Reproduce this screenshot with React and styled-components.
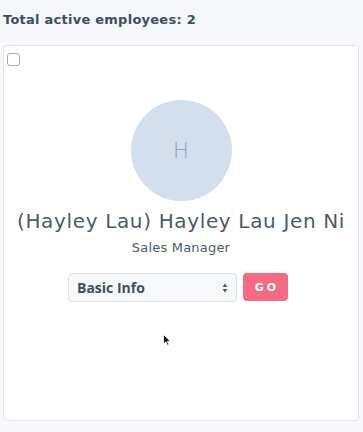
import styled, { createGlobalStyle } from "styled-components";

const GlobalStyle = createGlobalStyle`
  html, body {
    margin: 0;
    padding: 0;
    background: #f6f8fb;
    font-family: "DejaVu Sans", "Open Sans", sans-serif;
  }
`;

const Page = styled.div`
  width: 363px;
  height: 432px;
  box-sizing: border-box;
  padding: 10px 4px 11px 3px;
  display: flex;
  flex-direction: column;
  gap: 15px;
`;

const Heading = styled.h3`
  margin: 0;
  font-size: 13px;
  line-height: 20px;
  font-weight: 700;
  color: #3e4f5e;
  letter-spacing: 0.25px;
`;

const Card = styled.div`
  position: relative;
  flex: 1;
  background: #fff;
  border: 1px solid #e2e5ea;
  border-radius: 4px;
  display: flex;
  flex-direction: column;
  align-items: center;
  padding-top: 54px;
`;

const Check = styled.input`
  position: absolute;
  top: 7px;
  left: 3px;
  width: 13px;
  height: 13px;
  margin: 0;
  appearance: none;
  border: 1px solid #a9aeb5;
  border-radius: 3px;
  background: #fff;
`;

const Avatar = styled.div`
  width: 101px;
  height: 101px;
  border-radius: 50%;
  background: #d4dfee;
  color: #8c9fc7;
  font-size: 21px;
  font-weight: 300;
  display: flex;
  align-items: center;
  justify-content: center;
`;

const Name = styled.div`
  margin-top: 8px;
  font-size: 20px;
  line-height: 24px;
  font-weight: 400;
  color: #4b5b6a;
  letter-spacing: 0.65px;
  white-space: nowrap;
`;

const Role = styled.div`
  margin-top: 7px;
  font-size: 13px;
  line-height: 16px;
  color: #4b5b6a;
  letter-spacing: 0.2px;
`;

const Actions = styled.div`
  margin: 17px 6px 0 0;
  display: flex;
  gap: 6px;
`;

const Select = styled.div`
  width: 169px;
  height: 29px;
  box-sizing: border-box;
  border: 1px solid #dfe2e6;
  border-radius: 4px;
  background: #f8f9fa;
  padding: 0 8px 0 8px;
  display: flex;
  align-items: center;
  justify-content: space-between;
  font-family: "Open Sans", sans-serif;
  font-size: 14px;
  font-weight: 700;
  color: #3e4f5e;
`;

const GoButton = styled.button`
  width: 45px;
  height: 28px;
  border: none;
  border-radius: 4px;
  background: #f56b83;
  color: #fff;
  font-family: inherit;
  font-size: 11px;
  font-weight: 700;
  letter-spacing: 3px;
  padding: 0 0 0 3px;
`;

const Cursor = styled.svg`
  position: absolute;
  left: 159px;
  top: 288px;
`;

const Arrows = () => (
  <svg width="6" height="10" viewBox="0 0 6 10">
    <path d="M3 0.5 L5.5 4 H0.5 Z" fill="#4b5b6a" />
    <path d="M3 9.5 L5.5 6 H0.5 Z" fill="#4b5b6a" />
  </svg>
);

export default function App() {
  return (
    <>
      <GlobalStyle />
      <Page>
        <Heading>Total active employees: 2</Heading>
        <Card>
          <Check type="checkbox" />
          <Avatar>H</Avatar>
          <Name>(Hayley Lau) Hayley Lau Jen Ni</Name>
          <Role>Sales Manager</Role>
          <Actions>
            <Select>
              <span>Basic Info</span>
              <Arrows />
            </Select>
            <GoButton>GO</GoButton>
          </Actions>
          <Cursor width="8" height="12" viewBox="0 0 8 12">
            <path d="M0.5 0.5 V10 L2.8 7.8 L4.4 11.3 L5.8 10.7 L4.3 7.3 H7.3 Z" fill="#111" stroke="#fff" strokeWidth="0.8" />
          </Cursor>
        </Card>
      </Page>
    </>
  );
}
